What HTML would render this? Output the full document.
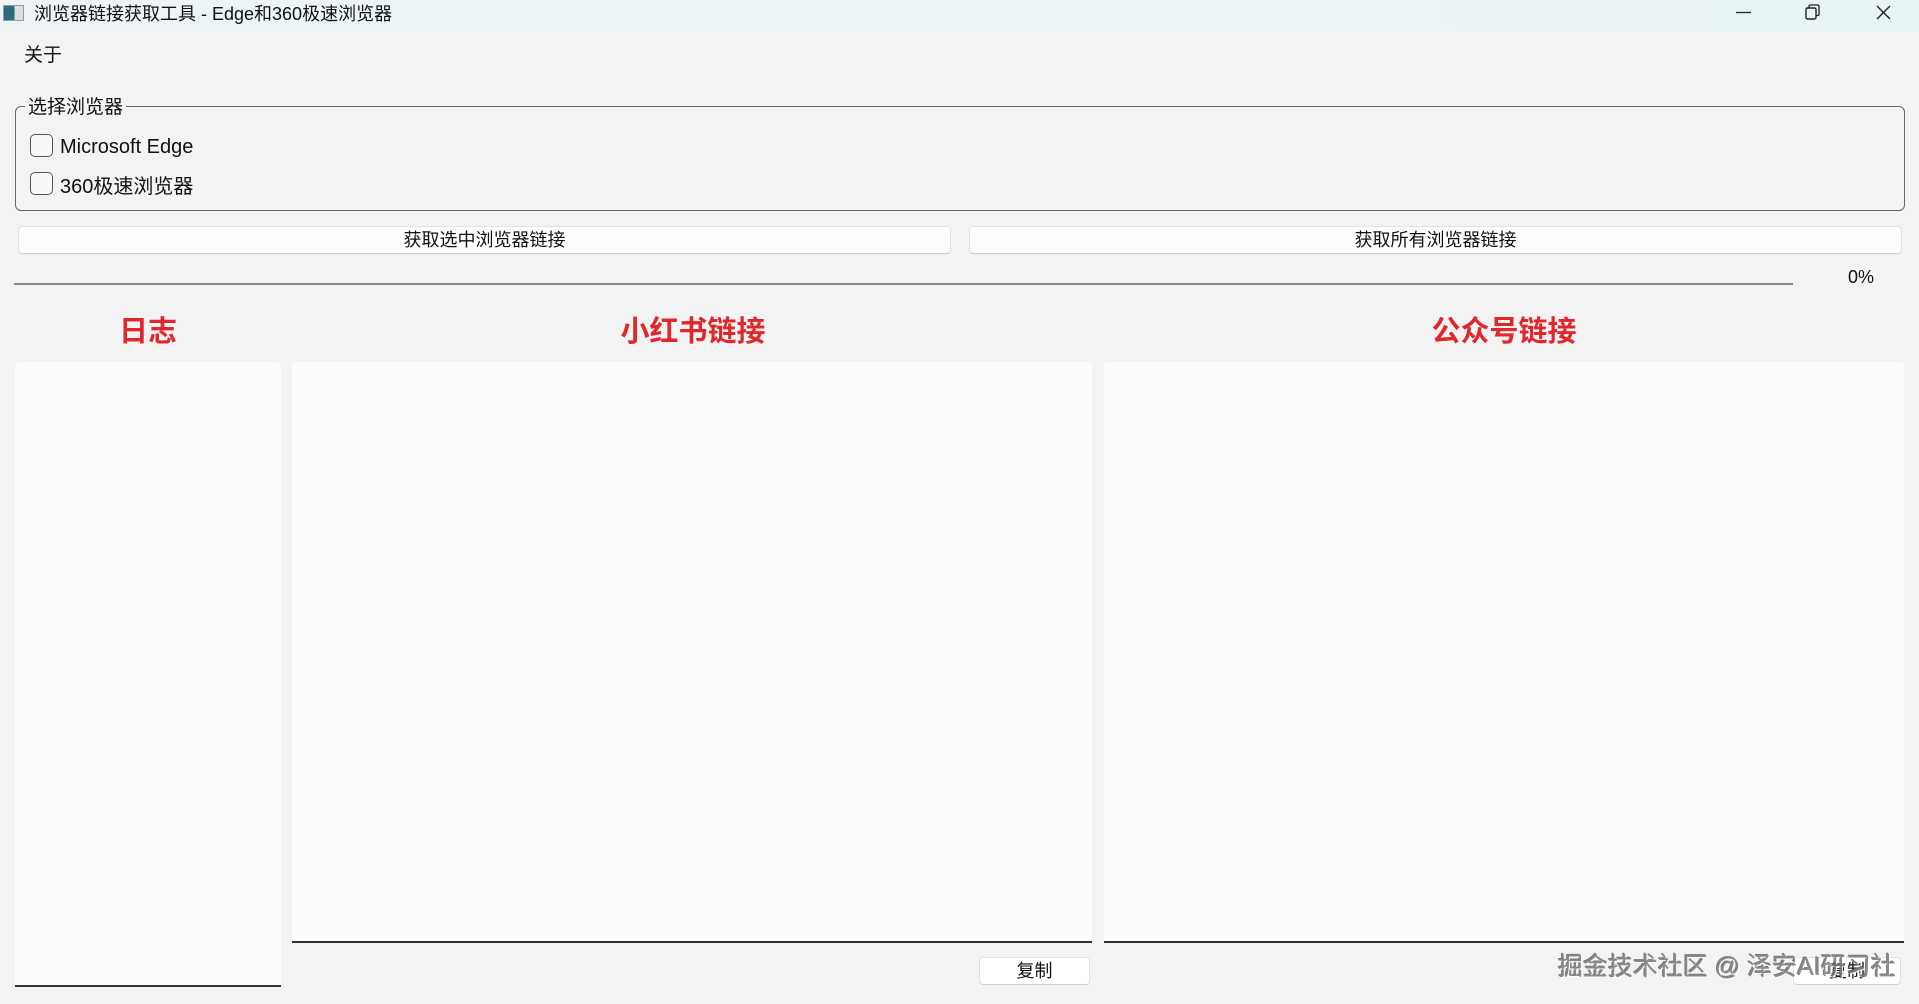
<!DOCTYPE html>
<html><head><meta charset="utf-8"><style>
*{margin:0;padding:0;box-sizing:border-box}
body{width:1919px;height:1004px;background:#f3f3f3;font-family:"Liberation Sans","Noto Sans CJK SC",sans-serif;position:relative;overflow:hidden;color:#111}
.a{position:absolute}
.title{left:0;top:0;width:1919px;height:31px;background:linear-gradient(90deg,#eef4f5,#e8f3f6);}
.btn{background:#fdfdfd;border:1px solid #e2e2e2;border-bottom:1px solid #cfcfcf;border-radius:4px;font-size:18px;text-align:center;line-height:26px}
.panel{background:#fbfbfb;border-radius:4px 4px 0 0;border-bottom:2px solid #333}
.h{font-size:29px;font-weight:bold;color:#e0282c;transform:translateX(-50%);top:308px}
.cb{width:23px;height:23px;border:1.5px solid #555;border-radius:5px;background:#f8f8f8}
</style></head><body>
<div class="a title"></div>
<div class="a" style="left:3px;top:5px;width:21px;height:16px;border:1px solid #999;background:linear-gradient(90deg,#2c6b7a 0 55%,#ddd 55%)"></div>
<div class="a" style="left:34px;top:2px;font-size:18px;line-height:24px">浏览器链接获取工具 - Edge和360极速浏览器</div>
<svg class="a" style="left:1700px;top:0" width="219" height="31"><path d="M36 12.5H51" stroke="#222" stroke-width="1.3"/><rect x="106" y="8" width="10" height="11" rx="1.5" fill="none" stroke="#222" stroke-width="1.4"/><path d="M109 8V6.5Q109 5 110.5 5H117.5Q119 5 119 6.5V14Q119 15.5 117.5 15.5H116" fill="none" stroke="#222" stroke-width="1.3"/><path d="M177 6L190 19M190 6L177 19" stroke="#222" stroke-width="1.4"/></svg>
<div class="a" style="left:24px;top:40px;font-size:19px">关于</div>
<div class="a" style="left:15px;top:106px;width:1890px;height:105px;border:1.5px solid #666;border-radius:6px"></div>
<div class="a" style="left:25px;top:92px;font-size:19px;background:#f3f3f3;padding:0 3px">选择浏览器</div>
<div class="a cb" style="left:30px;top:134px"></div>
<div class="a" style="left:60px;top:135px;font-size:20px;line-height:24px">Microsoft Edge</div>
<div class="a cb" style="left:30px;top:172px"></div>
<div class="a" style="left:60px;top:170px;font-size:20px">360极速浏览器</div>
<div class="a btn" style="left:18px;top:226px;width:933px;height:28px">获取选中浏览器链接</div>
<div class="a btn" style="left:969px;top:226px;width:933px;height:28px">获取所有浏览器链接</div>
<div class="a" style="left:14px;top:283px;width:1779px;height:1.5px;background:#888"></div>
<div class="a" style="left:1848px;top:267px;font-size:18px">0%</div>
<div class="a h" style="left:148px">日志</div>
<div class="a h" style="left:693px">小红书链接</div>
<div class="a h" style="left:1504px">公众号链接</div>
<div class="a panel" style="left:15px;top:362px;width:266px;height:625px"></div>
<div class="a panel" style="left:292px;top:362px;width:800px;height:581px"></div>
<div class="a panel" style="left:1104px;top:362px;width:800px;height:581px"></div>
<div class="a btn" style="left:979px;top:957px;width:111px;height:28px;background:#fff">复制</div>
<div class="a btn" style="left:1793px;top:957px;width:108px;height:28px;background:#fff">复制</div>
<div class="a" style="left:1558px;top:947px;font-size:25px;color:#777;text-shadow:1px 1px 0 #fff,-1px -1px 0 #666;opacity:.85">掘金技术社区 @ 泽安AI研习社</div>
</body></html>
